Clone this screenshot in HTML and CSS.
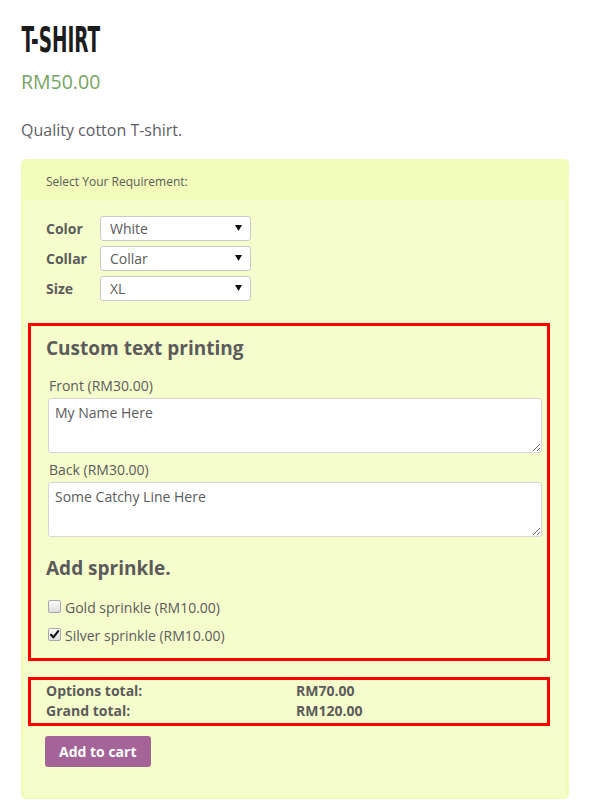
FILE: index.html
```html
<!DOCTYPE html>
<html>
<head>
<meta charset="utf-8">
<title>T-SHIRT</title>
<link rel="stylesheet" href="styles.css">
</head>
<body>
<div class="page">
  <h1 class="title"><span>T-SHIRT</span></h1>
  <p class="price">RM50.00</p>
  <p class="desc">Quality cotton T-shirt.</p>

  <div class="panel">
    <div class="panel-head">Select Your Requirement:</div>
    <div class="panel-body">
      <div class="attrs">
        <div class="attr-label">Color</div>
        <div class="sel"><span>White</span><svg class="arrow" width="7" height="6" viewBox="0 0 7 6"><polygon points="0,0 7,0 3.5,6" fill="#111"/></svg></div>
        <div class="attr-label">Collar</div>
        <div class="sel"><span>Collar</span><svg class="arrow" width="7" height="6" viewBox="0 0 7 6"><polygon points="0,0 7,0 3.5,6" fill="#111"/></svg></div>
        <div class="attr-label">Size</div>
        <div class="sel"><span>XL</span><svg class="arrow" width="7" height="6" viewBox="0 0 7 6"><polygon points="0,0 7,0 3.5,6" fill="#111"/></svg></div>
      </div>

      <div class="addon">
        <h3 class="addon-title">Custom text printing</h3>
        <div class="fld">Front (RM30.00)</div>
        <textarea class="ta">My Name Here</textarea>
        <div class="fld fld-gap">Back (RM30.00)</div>
        <textarea class="ta">Some Catchy Line Here</textarea>

        <h3 class="addon-title sprinkle">Add sprinkle.</h3>
        <div class="check"><span class="cb"></span><span>Gold sprinkle (RM10.00)</span></div>
        <div class="check check-2"><span class="cb"><svg width="11" height="11" viewBox="0 0 11 11"><path d="M2 5.8 L4.4 8.4 L9.2 2.2" fill="none" stroke="#111" stroke-width="2.1" stroke-linecap="round" stroke-linejoin="round"/></svg></span><span>Silver sprinkle (RM10.00)</span></div>
      </div>

      <div class="totals">
        <div>Options total:</div><div>RM70.00</div>
        <div>Grand total:</div><div>RM120.00</div>
      </div>

      <button class="add">Add to cart</button>
    </div>
  </div>
</div>
</body>
</html>
```

FILE: styles.css
```css
* { box-sizing: border-box; }

html, body {
  margin: 0;
  padding: 0;
  background: #ffffff;
}

body {
  font-family: "Open Sans", "Liberation Sans", sans-serif;
  color: #5b5b5b;
}

.page {
  padding-left: 21px;
  width: 600px;
}

.title {
  margin: 22px 0 0 0;
  font-family: "DejaVu Sans Condensed", "Liberation Sans", sans-serif;
  font-weight: 700;
  font-size: 36px;
  line-height: 36px;
  color: #1c1c1c;
  height: 36px;
}

.title span {
  display: inline-block;
  transform: scaleX(0.57);
  transform-origin: 1px 0;
  letter-spacing: 0;
}

.price {
  margin: 12px 0 0 0;
  font-size: 19.5px;
  line-height: 24px;
  color: #77a464;
}

.desc {
  margin: 24px 0 0 0;
  font-size: 16px;
  line-height: 24px;
  color: #5d5e66;
}

.panel {
  margin-top: 17px;
  width: 548px;
  background: #f1fcba;
  border-radius: 5px;
  padding: 0 4px 2px 3px;
}

.panel-head {
  font-size: 12px;
  line-height: 14px;
  padding: 16px 0 11px 22px;
  color: #5b5b5b;
}

.panel-body {
  background: #f6fdcd;
  padding: 16px 0 30px 0;
}

.attrs {
  display: grid;
  grid-template-columns: 54px 151px;
  grid-auto-rows: 25px;
  row-gap: 5px;
  margin-left: 22px;
}

.attr-label {
  font-weight: 700;
  font-size: 14px;
  line-height: 25px;
  height: 25px;
  color: #5b5b5b;
}

.sel {
  height: 25px;
  background: #ffffff;
  border: 1px solid #c9c9c9;
  border-radius: 3px;
  display: flex;
  align-items: center;
  justify-content: space-between;
  padding: 0 8px 0 9px;
  font-size: 14px;
  line-height: 23px;
  color: #5b5b5b;
  overflow: hidden;
}

.arrow {
  display: block;
  margin-top: -2px;
}

.addon {
  margin: 22px 15px 0 4px;
  border: 3px solid #ff0000;
  padding: 10px 0 12px 15px;
}

.addon-title {
  margin: 0;
  font-size: 19px;
  line-height: 24px;
  font-weight: 700;
  color: #5b5b5b;
}

.fld {
  margin: 16px 0 2px 3px;
  font-size: 14px;
  line-height: 20px;
  color: #5b5b5b;
}

.fld-gap {
  margin-top: 7px;
}

.ta {
  display: block;
  margin: 0 0 0 2px;
  width: 494px;
  height: 55px;
  background: #ffffff;
  border: 1px solid #d6d6d6;
  border-radius: 3px;
  padding: 4px 6px;
  font-family: "Open Sans", "Liberation Sans", sans-serif;
  font-size: 14px;
  line-height: 20px;
  color: #5b5b5b;
  outline: none;
}

.sprinkle {
  margin-top: 19px;
}

.check {
  display: flex;
  align-items: flex-start;
  margin-top: 18px;
  font-size: 14px;
  line-height: 20px;
  color: #5b5b5b;
}

.check-2 {
  margin-top: 8px;
}

.cb {
  flex: none;
  width: 13px;
  height: 13px;
  margin: 2px 4px 0 2px;
  border: 1px solid #a8a8a8;
  border-radius: 2px;
  background: linear-gradient(#fbfbfb, #dedede);
  display: flex;
  align-items: center;
  justify-content: center;
}

.cb svg {
  display: block;
}

.totals {
  margin: 16px 15px 0 4px;
  border: 3px solid #ff0000;
  padding: 1px 0 2px 15px;
  display: grid;
  grid-template-columns: 250px auto;
  font-size: 14px;
  line-height: 20px;
  font-weight: 700;
  color: #5b5b5b;
}

.add {
  display: block;
  margin: 10px 0 0 21px;
  height: 31px;
  padding: 0 14px;
  border: none;
  border-radius: 3px;
  background: #a46497;
  color: #ffffff;
  font-family: "Open Sans", "Liberation Sans", sans-serif;
  font-weight: 700;
  font-size: 14px;
  line-height: 31px;
}
```
